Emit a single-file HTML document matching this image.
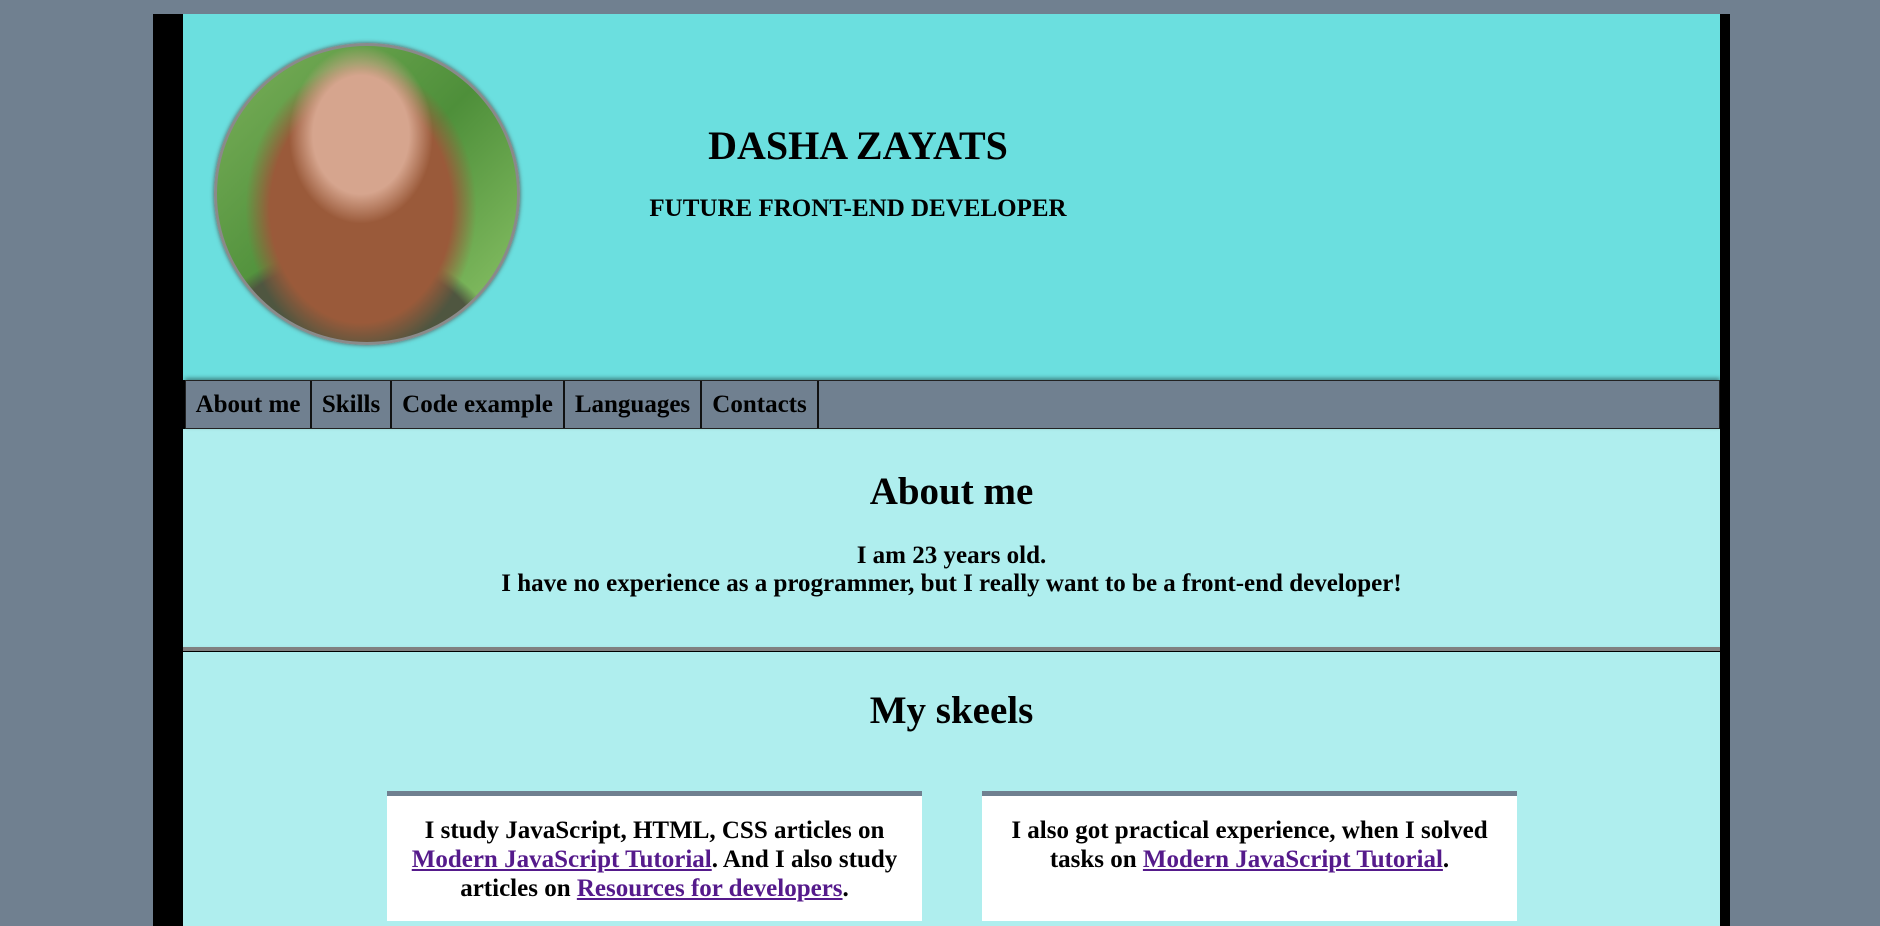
<!DOCTYPE html>
<html><head><meta charset="utf-8"><style>
*{margin:0;padding:0;box-sizing:border-box}
html,body{width:1880px;height:926px;overflow:hidden;background:#708090;font-family:"Liberation Serif",serif;font-weight:bold;color:#000}
.wrap{position:absolute;left:153px;top:14px;width:1577px;height:912px;background:#000}
.hdr{position:absolute;left:183px;top:14px;width:1537px;height:366px;background:#6bdfdf}
.photo{position:absolute;left:214px;top:43px;width:306px;height:302px;border-radius:50%;border:3px solid #8a8a8a;overflow:hidden;
background:radial-gradient(ellipse 40% 50% at 48% 30%,#d6a58e 0 40%,transparent 60%),
radial-gradient(ellipse 55% 70% at 48% 55%,#9a5a3a 0 55%,transparent 70%),
radial-gradient(ellipse 60% 40% at 45% 100%,#4f5640 0 70%,transparent 80%),
linear-gradient(135deg,#7bb05a,#4e8f3a 50%,#8fc76a);box-shadow:0 0 4px #555}
.h1{position:absolute;left:560px;width:596px;top:122px;text-align:center;font-size:40px}
.h3{position:absolute;left:560px;width:596px;top:195px;text-align:center;font-size:25px}
.nav{position:absolute;left:185px;top:380px;width:1535px;height:49px;background:#708090;border:1px solid #222;box-shadow:0 -2px 4px rgba(0,0,0,.4)}
.nav span{position:absolute;top:0;height:47px;line-height:47px;text-align:center;font-size:25px;border-right:2px solid #111}
.sec{position:absolute;left:183px;width:1537px;background:#afeeee;text-align:center}
.s1{top:429px;height:219px}
.s2{top:652px;height:274px}
.line{position:absolute;left:183px;top:647px;width:1537px;height:4px;background:#808080;box-shadow:0 3px 5px rgba(0,0,0,.3)}
h2{font-size:39px;position:absolute;width:100%}
.p{position:absolute;width:100%;font-size:25px;line-height:28px}
.card{position:absolute;top:791px;height:130px;width:535px;background:#fff;border-top:5px solid #708090;font-size:25px;line-height:29px;text-align:center;padding:20px 20px 0}
a{color:#551a8b;text-decoration:underline}
</style></head><body>
<div class="wrap"></div>
<div class="hdr"></div>
<div class="photo"></div>
<div class="h1">DASHA ZAYATS</div>
<div class="h3">FUTURE FRONT-END DEVELOPER</div>
<div class="sec s1"><h2 style="top:40px">About me</h2>
<div class="p" style="top:113px">I am 23 years old.<br>I have no experience as a programmer, but I really want to be a front-end developer!</div></div>
<div class="line"></div>
<div class="sec s2"><h2 style="top:36px">My skeels</h2></div>
<div class="nav">
<span style="left:0;width:126px">About me</span>
<span style="left:126px;width:80px">Skills</span>
<span style="left:206px;width:173px">Code example</span>
<span style="left:379px;width:137px">Languages</span>
<span style="left:516px;width:117px">Contacts</span>
</div>
<div class="card" style="left:387px">I study JavaScript, HTML, CSS articles on <a>Modern JavaScript Tutorial</a>. And I also study articles on <a>Resources for developers</a>.</div>
<div class="card" style="left:982px">I also got practical experience, when I solved tasks on <a>Modern JavaScript Tutorial</a>.</div>
</body></html>
